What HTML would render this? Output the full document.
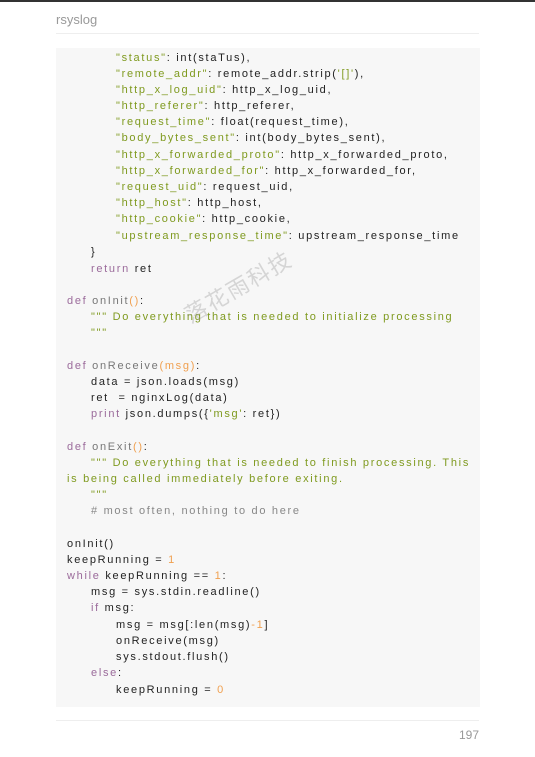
<!DOCTYPE html>
<html><head><meta charset="utf-8"><style>
body{margin:0;width:535px;height:757px;background:#fff;position:relative;overflow:hidden;font-family:"Liberation Sans",sans-serif}
.top{position:absolute;left:0;top:0;width:535px;height:2px;background:#333}
.hd{position:absolute;left:56px;top:12px;font-size:13px;color:#999}
.hl{position:absolute;left:56px;right:56px;top:33px;height:1px;background:#eee}
.box{position:absolute;left:56px;width:424px;top:48px;height:659px;background:#f7f7f7}
.fl{position:absolute;left:56px;right:56px;top:720px;height:1px;background:#eee}
.pn{position:absolute;right:56px;top:728px;font-size:12px;color:#999}
.c0{position:absolute;left:0;top:1px;width:535px}
.l{position:absolute;font-family:"Liberation Sans",sans-serif;font-size:11px;letter-spacing:1.7px;color:#222;white-space:pre;line-height:14px}
.s{color:#7f9a1f}.k{color:#9b6b9b}.n{color:#f0a050}.c{color:#888}.f{color:#777}
.wm{position:absolute;left:178px;top:270px;font-family:"Noto Sans CJK SC",sans-serif;font-size:22px;color:rgba(150,150,150,.35);transform:rotate(-30deg);letter-spacing:2px}
</style></head><body>
<div class="top"></div>
<div class="hd">rsyslog</div><div class="hl"></div>
<div class="box"></div>
<div class="c0">
<div class="l" style="left:116px;top:50px"><span class="s">"status"</span>: int(staTus),</div>
<div class="l" style="left:116px;top:66px"><span class="s">"remote_addr"</span>: remote_addr.strip(<span class="s">'[]'</span>),</div>
<div class="l" style="left:116px;top:82px"><span class="s">"http_x_log_uid"</span>: http_x_log_uid,</div>
<div class="l" style="left:116px;top:98px"><span class="s">"http_referer"</span>: http_referer,</div>
<div class="l" style="left:116px;top:114px"><span class="s">"request_time"</span>: float(request_time),</div>
<div class="l" style="left:116px;top:130px"><span class="s">"body_bytes_sent"</span>: int(body_bytes_sent),</div>
<div class="l" style="left:116px;top:147px"><span class="s">"http_x_forwarded_proto"</span>: http_x_forwarded_proto,</div>
<div class="l" style="left:116px;top:163px"><span class="s">"http_x_forwarded_for"</span>: http_x_forwarded_for,</div>
<div class="l" style="left:116px;top:179px"><span class="s">"request_uid"</span>: request_uid,</div>
<div class="l" style="left:116px;top:195px"><span class="s">"http_host"</span>: http_host,</div>
<div class="l" style="left:116px;top:211px"><span class="s">"http_cookie"</span>: http_cookie,</div>
<div class="l" style="left:116px;top:228px"><span class="s">"upstream_response_time"</span>: upstream_response_time</div>
<div class="l" style="left:91px;top:244px">}</div>
<div class="l" style="left:91px;top:261px"><span class="k">return</span> ret</div>
<div class="l" style="left:67px;top:293px"><span class="k">def</span> <span class="f">onInit</span><span class="n">()</span>:</div>
<div class="l" style="left:91px;top:309px"><span class="s">""" Do everything that is needed to initialize processing</span></div>
<div class="l" style="left:91px;top:325px"><span class="s">"""</span></div>
<div class="l" style="left:67px;top:358px"><span class="k">def</span> <span class="f">onReceive</span><span class="n">(msg)</span>:</div>
<div class="l" style="left:91px;top:374px">data = json.loads(msg)</div>
<div class="l" style="left:91px;top:390px">ret  = nginxLog(data)</div>
<div class="l" style="left:91px;top:406px"><span class="k">print</span> json.dumps({<span class="s">'msg'</span>: ret})</div>
<div class="l" style="left:67px;top:439px"><span class="k">def</span> <span class="f">onExit</span><span class="n">()</span>:</div>
<div class="l" style="left:91px;top:455px"><span class="s">""" Do everything that is needed to finish processing. This</span></div>
<div class="l" style="left:67px;top:471px"><span class="s">is being called immediately before exiting.</span></div>
<div class="l" style="left:91px;top:487px"><span class="s">"""</span></div>
<div class="l" style="left:91px;top:503px"><span class="c"># most often, nothing to do here</span></div>
<div class="l" style="left:67px;top:536px">onInit()</div>
<div class="l" style="left:67px;top:552px">keepRunning = <span class="n">1</span></div>
<div class="l" style="left:67px;top:568px"><span class="k">while</span> keepRunning == <span class="n">1</span>:</div>
<div class="l" style="left:91px;top:584px">msg = sys.stdin.readline()</div>
<div class="l" style="left:91px;top:600px"><span class="k">if</span> msg:</div>
<div class="l" style="left:116px;top:617px">msg = msg[:len(msg)<span class="n">-1</span>]</div>
<div class="l" style="left:116px;top:633px">onReceive(msg)</div>
<div class="l" style="left:116px;top:649px">sys.stdout.flush()</div>
<div class="l" style="left:91px;top:665px"><span class="k">else</span>:</div>
<div class="l" style="left:116px;top:682px">keepRunning = <span class="n">0</span></div>
</div>
<div class="wm">落花雨科技</div>
<div class="fl"></div>
<div class="pn">197</div>
</body></html>
